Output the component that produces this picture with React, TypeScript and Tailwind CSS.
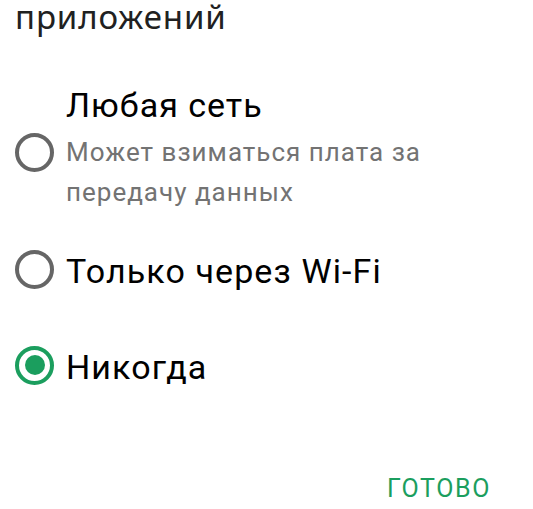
import type { ReactNode } from 'react';

function Radio({ checked }: { checked?: boolean }) {
    return (
        <div
            className={
                checked
                    ? 'flex h-[39px] w-[39px] shrink-0 items-center justify-center rounded-full border-4 border-[#1b9e5e]'
                    : 'h-[39px] w-[39px] shrink-0 rounded-full border-4 border-[#666666]'
            }
        >
            {checked && <div className="h-[20px] w-[20px] rounded-full bg-[#1b9e5e]" />}
        </div>
    );
}

function Option({ checked, children }: { checked?: boolean; children: ReactNode }) {
    return (
        <div className="flex h-[48px] items-center">
            <Radio checked={checked} />
            <span className="ml-[12px] pt-[4px] text-[34px] leading-[40px] tracking-[1.1px] text-black">
                {children}
            </span>
        </div>
    );
}

export default function App() {
    return (
        <div className="flex h-[509px] w-[533px] flex-col overflow-hidden bg-white font-['Roboto',sans-serif]">
            <h2 className="pl-[15px] font-['Noto_Sans',sans-serif] text-[33px] leading-[34px] tracking-[0.9px] text-[#212121]">
                приложений
            </h2>

            <div className="ml-[15px] flex flex-col">
                {/* Any network, with a note about charges */}
                <div className="mt-[51px] flex items-start">
                    <div className="mt-[48px]">
                        <Radio />
                    </div>
                    <div className="ml-[12px]">
                        <div className="text-[34px] leading-[40px] tracking-[1px] text-black">Любая сеть</div>
                        <div className="mt-[7px] text-[26px] leading-[40px] tracking-[1px] text-[#737373]">
                            Может взиматься плата за
                            <br />
                            передачу данных
                        </div>
                    </div>
                </div>

                <div className="mt-[33px]">
                    <Option>Только через Wi-Fi</Option>
                </div>
                <div className="mt-[48px]">
                    <Option checked>Никогда</Option>
                </div>
            </div>

            <div className="mt-auto flex justify-end pb-[8px] pr-[42px]">
                <button className="text-[25px] font-normal leading-[24px] tracking-[1.6px] text-[#1b9e5e]">ГОТОВО</button>
            </div>
        </div>
    );
}
